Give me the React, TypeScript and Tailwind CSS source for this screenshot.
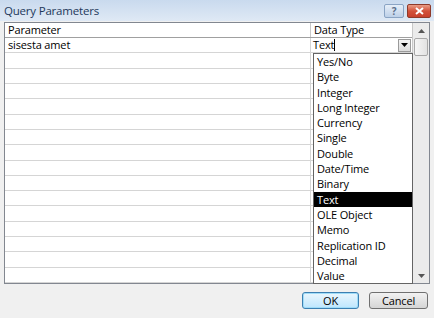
import React from "react";

const types = [
  "Yes/No",
  "Byte",
  "Integer",
  "Long Integer",
  "Currency",
  "Single",
  "Double",
  "Date/Time",
  "Binary",
  "Text",
  "OLE Object",
  "Memo",
  "Replication ID",
  "Decimal",
  "Value",
];

const rows = Array.from({ length: 15 });

export default function App() {
  return (
    <div
      className="w-[434px] h-[318px] bg-[#f0f0f0] flex flex-col overflow-hidden text-[11px] tracking-[-0.15px] text-black"
      style={{ fontFamily: '"Open Sans", "Noto Sans", sans-serif' }}
    >
      {/* title bar */}
      <div className="h-[21px] flex items-center justify-between pl-[4px] pr-[3px] bg-gradient-to-b from-[#c9daee] to-[#dfe9f5]">
        <span className="text-[11.5px] text-[#1e395b] tracking-[-0.2px]">Query Parameters</span>
        <div className="flex gap-[3px]">
          <div className="w-[20px] h-[14px] rounded-[2px] border border-[#8aa4c4] bg-gradient-to-b from-[#e6eef8] to-[#bdd0e8] flex items-center justify-center text-[10px] font-bold text-[#5c6f8a] leading-none">
            ?
          </div>
          <div className="w-[24px] h-[14px] rounded-[2px] border border-[#8e3a2a] bg-gradient-to-b from-[#e89c86] via-[#d2513a] to-[#c8402c] flex items-center justify-center">
            <svg width="9" height="8" viewBox="0 0 9 8">
              <path d="M1 1 L8 7 M8 1 L1 7" stroke="#fff" strokeWidth="2" />
            </svg>
          </div>
        </div>
      </div>

      {/* grid */}
      <div className="relative mx-[4px] mt-[1px] h-[262px] border border-[#828790] bg-white flex">
        <div className="flex-1 flex flex-col">
          <div className="h-[15px] flex border-b border-[#a0a0a0] leading-[14px]">
            <div className="w-[306px] pl-[3px] border-r border-[#c8c8c8]">Parameter</div>
            <div className="flex-1 pl-[3px]">Data Type</div>
          </div>
          <div className="h-[15.4px] flex border-b border-[#d5d5d5] leading-[14px]">
            <div className="w-[306px] pl-[3px] border-r border-[#d5d5d5]">sisesta amet</div>
            <div className="flex-1 flex items-center pl-[2px] pr-[1px]">
              <span>Text</span>
              <span className="w-px h-[12px] bg-black" />
              <div className="ml-auto w-[13px] h-[13px] border border-[#9a9a9a] bg-gradient-to-b from-[#f4f4f4] to-[#dcdcdc] flex items-center justify-center">
                <svg width="7" height="4" viewBox="0 0 7 4">
                  <path d="M0 0 H7 L3.5 4 Z" fill="#000" />
                </svg>
              </div>
            </div>
          </div>
          {rows.map((_, i) => (
            <div key={i} className="h-[15.4px] flex border-b border-[#d5d5d5]">
              <div className="w-[306px] border-r border-[#d5d5d5]" />
              <div className="flex-1" />
            </div>
          ))}
        </div>

        {/* scrollbar */}
        <div className="w-[17px] border-l border-[#c8c8c8] bg-[#ebebeb] flex flex-col">
          <div className="h-[15px] flex items-center justify-center">
            <svg width="7" height="4" viewBox="0 0 7 4">
              <path d="M0 4 H7 L3.5 0 Z" fill="#555" />
            </svg>
          </div>
          <div className="mx-[1px] h-[18px] rounded-[2px] border border-[#a8a8a8] bg-gradient-to-r from-[#f6f6f6] to-[#e2e2e2]" />
          <div className="flex-1" />
          <div className="h-[15px] flex items-center justify-center">
            <svg width="7" height="4" viewBox="0 0 7 4">
              <path d="M0 0 H7 L3.5 4 Z" fill="#555" />
            </svg>
          </div>
        </div>

        {/* dropdown list */}
        <div className="absolute left-[308px] top-[30px] w-[100px] border border-[#646464] bg-white leading-[15.3px]">
          {types.map((t) => (
            <div
              key={t}
              className={`h-[15.3px] pl-[3px] ${t === "Text" ? "bg-black text-white" : ""}`}
            >
              {t}
            </div>
          ))}
        </div>
      </div>

      {/* buttons */}
      <div className="flex justify-end gap-[10px] pr-[6px] mt-[8px]">
        <button className="w-[57px] h-[17px] rounded-[3px] border border-[#3c7fb1] bg-gradient-to-b from-[#eaf6fd] to-[#bee6fd] text-[11px] leading-none shadow-[inset_0_0_0_1px_#9fdcf8]">
          OK
        </button>
        <button className="w-[59px] h-[17px] rounded-[3px] border border-[#707070] bg-gradient-to-b from-[#f2f2f2] to-[#d5d5d5] text-[11px] leading-none">
          Cancel
        </button>
      </div>
    </div>
  );
}
